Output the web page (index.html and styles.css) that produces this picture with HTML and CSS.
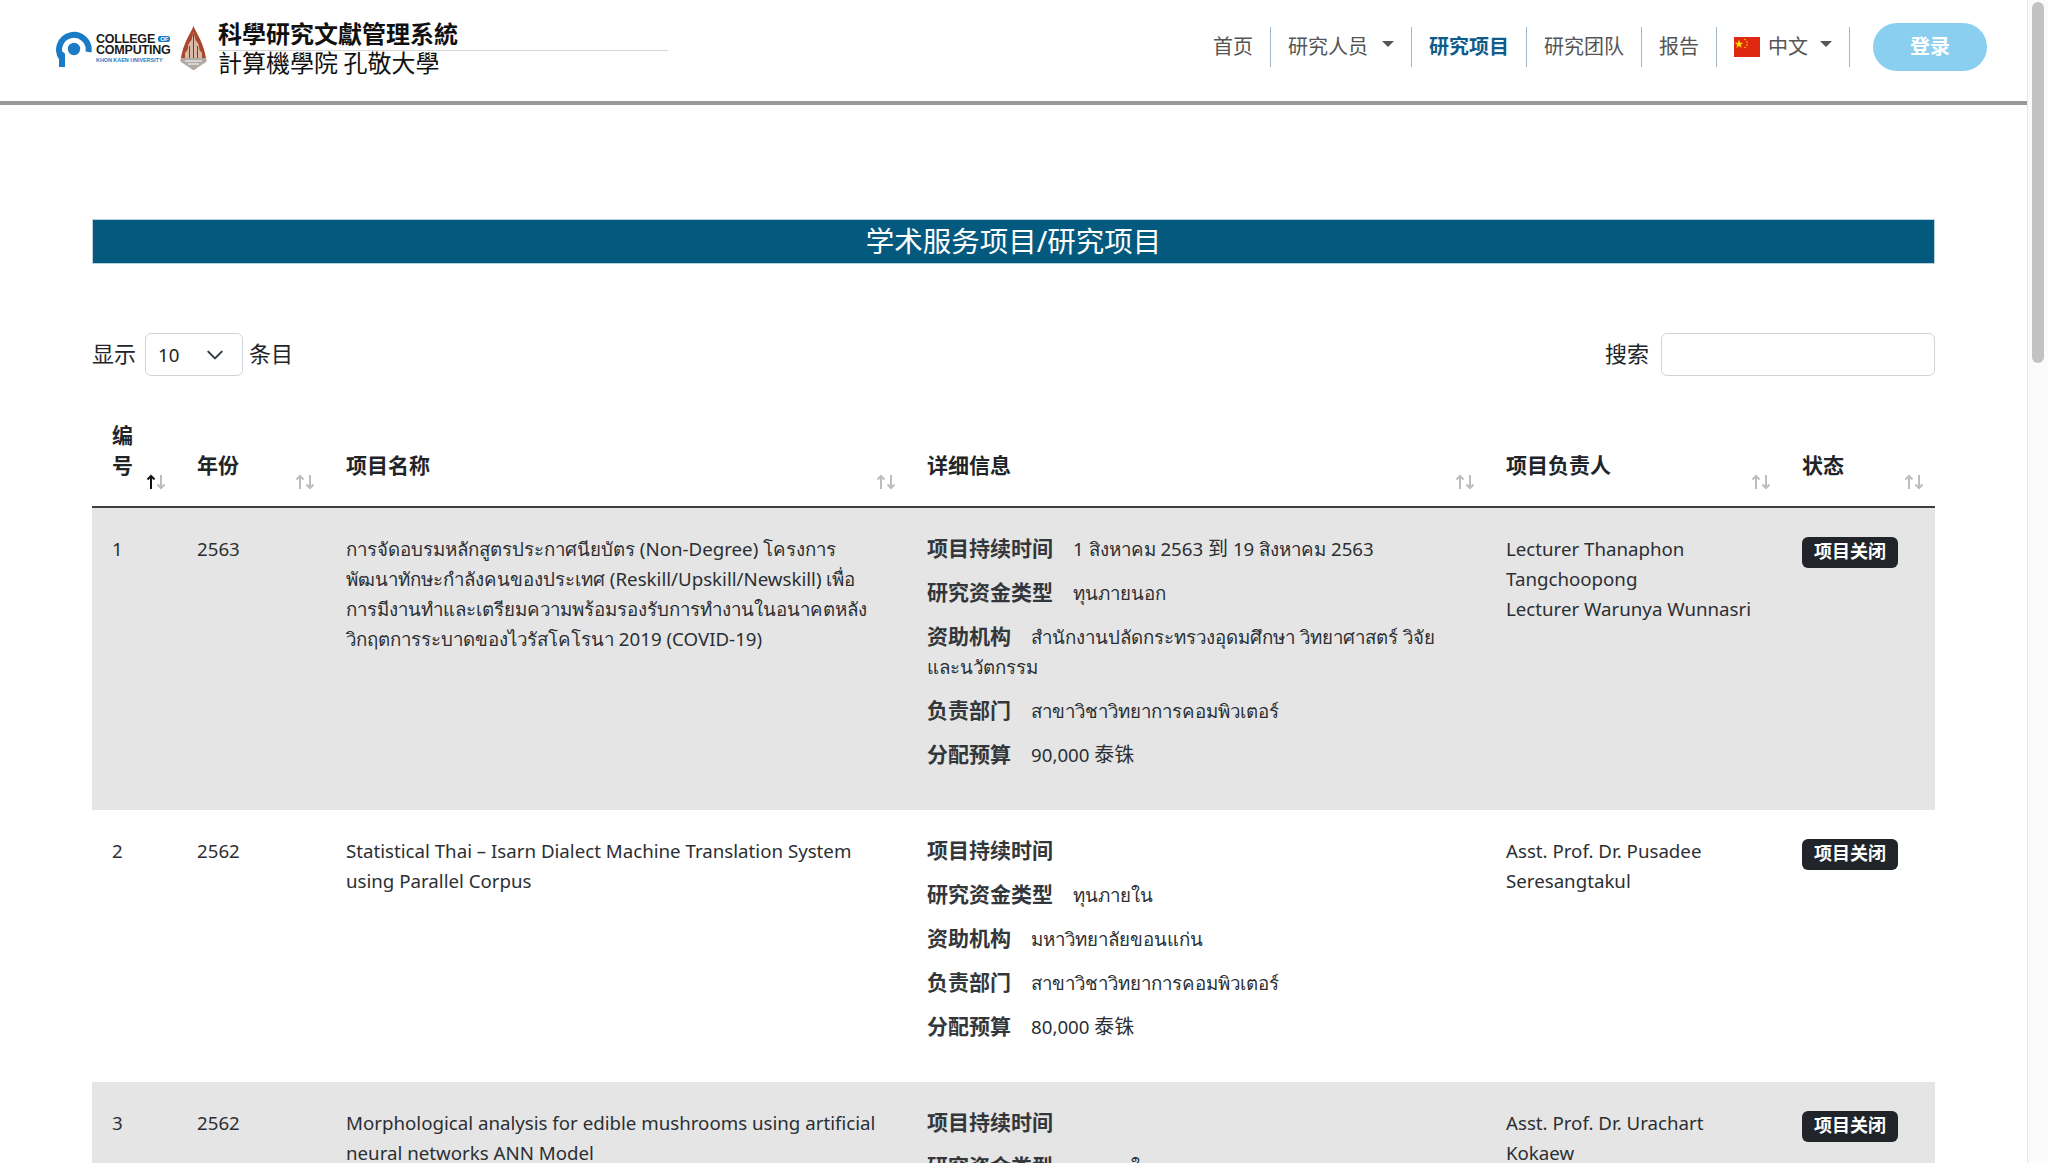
FILE: index.html
```html
<!DOCTYPE html>
<html lang="zh">
<head>
<meta charset="utf-8">
<title>学术服务项目/研究项目</title>
<link rel="stylesheet" href="styles.css">
</head>
<body>
<header class="navbar">
  <a class="brand">
    <svg class="logo-mark" width="36" height="36" viewBox="0 0 36 36"><path d="M6 27.500 A14.800 14.800 0 1 1 32.500 21" fill="none" stroke="#1a7cc4" stroke-width="6"/><path d="M6 24v11" stroke="#1a7cc4" stroke-width="6" stroke-linecap="round"/><circle cx="18" cy="18" r="6.200" fill="#1a7cc4"/></svg>
    <span class="logo-text">
      <span class="logo-line">COLLEGE <span class="logo-of">OF</span></span>
      <span class="logo-line">COMPUTING</span>
      <span class="logo-uni">KHON KAEN UNIVERSITY</span>
    </span>
    <svg class="emblem" width="27" height="46" viewBox="0 0 27 46"><path d="M13.500 1C16 8 24 17 26.500 36L13.500 45L.5 36C3 17 11 8 13.500 1Z" fill="#a9472e"/><path d="M13.500 7L15.500 15L18.500 19L19.500 25L22 28V34H5V28L7.500 25L8.500 19L11.500 15Z" fill="#d9b8a6"/><path d="M13.500 9V33M9.500 21V33M17.500 21V33" stroke="#7b3a26" stroke-width="1"/><path d="M1 33H26V37L13.500 45L1 37Z" fill="#b0aaa3"/><path d="M5 36H22M8 39H19" stroke="#fff" stroke-width="1"/></svg>
    <span class="brand-text">
      <span class="brand-title">科學研究文獻管理系統</span>
      <span class="brand-sub">計算機學院 孔敬大學</span>
    </span>
  </a>
  <nav class="nav">
    <a class="nav-item">首页</a>
    <a class="nav-item has-caret">研究人员</a>
    <a class="nav-item active">研究项目</a>
    <a class="nav-item">研究团队</a>
    <a class="nav-item">报告</a>
    <a class="nav-item has-caret lang">
      <svg class="flag" width="26" height="20" viewBox="0 0 26 20"><rect width="26" height="20" fill="#de2910"/><path d="M5 2.500l1.100 3.200h3.300l-2.700 2 1 3.200L5 9l-2.700 1.900 1-3.200-2.700-2h3.300z" fill="#ffde00"/><circle cx="11" cy="2.500" r=".8" fill="#ffde00"/><circle cx="13" cy="5" r=".8" fill="#ffde00"/><circle cx="13" cy="8" r=".8" fill="#ffde00"/><circle cx="11" cy="10.500" r=".8" fill="#ffde00"/></svg>
      中文
    </a>
    <a class="login">登录</a>
  </nav>
</header>

<main class="page">
  <h1 class="page-title">学术服务项目/研究项目</h1>

  <div class="controls">
    <label class="length">显示
      <span class="select">10
        <svg width="18" height="18" viewBox="0 0 16 16"><path d="M2 5l6 6 6-6" fill="none" stroke="#343a40" stroke-width="1.800" stroke-linecap="round" stroke-linejoin="round"/></svg>
      </span>
    条目</label>
    <label class="search">搜索 <span class="search-box"></span></label>
  </div>

  <table class="data">
    <colgroup>
      <col class="c-no"><col class="c-year"><col class="c-name"><col class="c-detail"><col class="c-lead"><col class="c-status">
    </colgroup>
    <thead>
      <tr>
        <th>编号<svg class="sort" width="20" height="16" viewBox="0 0 20 16"><path class="up-on" d="M5 15V2M1.500 5.500L5 2l3.500 3.500"/><path d="M15 1V14M11.500 10.500L15 14l3.500-3.500"/></svg></th>
        <th>年份<svg class="sort" width="20" height="16" viewBox="0 0 20 16"><path d="M5 15V2M1.500 5.500L5 2l3.500 3.500"/><path d="M15 1V14M11.500 10.500L15 14l3.500-3.500"/></svg></th>
        <th>项目名称<svg class="sort" width="20" height="16" viewBox="0 0 20 16"><path d="M5 15V2M1.500 5.500L5 2l3.500 3.500"/><path d="M15 1V14M11.500 10.500L15 14l3.500-3.500"/></svg></th>
        <th>详细信息<svg class="sort" width="20" height="16" viewBox="0 0 20 16"><path d="M5 15V2M1.500 5.500L5 2l3.500 3.500"/><path d="M15 1V14M11.500 10.500L15 14l3.500-3.500"/></svg></th>
        <th>项目负责人<svg class="sort" width="20" height="16" viewBox="0 0 20 16"><path d="M5 15V2M1.500 5.500L5 2l3.500 3.500"/><path d="M15 1V14M11.500 10.500L15 14l3.500-3.500"/></svg></th>
        <th>状态<svg class="sort" width="20" height="16" viewBox="0 0 20 16"><path d="M5 15V2M1.500 5.500L5 2l3.500 3.500"/><path d="M15 1V14M11.500 10.500L15 14l3.500-3.500"/></svg></th>
      </tr>
    </thead>
    <tbody>
      <tr class="odd">
        <td>1</td>
        <td>2563</td>
        <td>การจัดอบรมหลักสูตรประกาศนียบัตร (Non-Degree) โครงการ<br>พัฒนาทักษะกำลังคนของประเทศ (Reskill/Upskill/Newskill) เพื่อ<br>การมีงานทำและเตรียมความพร้อมรองรับการทำงานในอนาคตหลัง<br>วิกฤตการระบาดของไวรัสโคโรนา 2019 (COVID-19)</td>
        <td>
          <p class="info"><strong>项目持续时间</strong>1 สิงหาคม 2563 <span class="cjk">到</span> 19 สิงหาคม 2563</p>
          <p class="info"><strong>研究资金类型</strong>ทุนภายนอก</p>
          <p class="info"><strong>资助机构</strong>สำนักงานปลัดกระทรวงอุดมศึกษา วิทยาศาสตร์ วิจัย และนวัตกรรม</p>
          <p class="info"><strong>负责部门</strong>สาขาวิชาวิทยาการคอมพิวเตอร์</p>
          <p class="info"><strong>分配预算</strong>90,000 <span class="cjk">泰铢</span></p>
        </td>
        <td>Lecturer Thanaphon Tangchoopong<br>Lecturer Warunya Wunnasri</td>
        <td><span class="badge">项目关闭</span></td>
      </tr>
      <tr>
        <td>2</td>
        <td>2562</td>
        <td>Statistical Thai – Isarn Dialect Machine Translation System using Parallel Corpus</td>
        <td>
          <p class="info"><strong>项目持续时间</strong></p>
          <p class="info"><strong>研究资金类型</strong>ทุนภายใน</p>
          <p class="info"><strong>资助机构</strong>มหาวิทยาลัยขอนแก่น</p>
          <p class="info"><strong>负责部门</strong>สาขาวิชาวิทยาการคอมพิวเตอร์</p>
          <p class="info"><strong>分配预算</strong>80,000 <span class="cjk">泰铢</span></p>
        </td>
        <td>Asst. Prof. Dr. Pusadee Seresangtakul</td>
        <td><span class="badge">项目关闭</span></td>
      </tr>
      <tr class="odd">
        <td>3</td>
        <td>2562</td>
        <td>Morphological analysis for edible mushrooms using artificial neural networks ANN Model</td>
        <td>
          <p class="info"><strong>项目持续时间</strong></p>
          <p class="info"><strong>研究资金类型</strong>ทุนภายใน</p>
        </td>
        <td>Asst. Prof. Dr. Urachart Kokaew</td>
        <td><span class="badge">项目关闭</span></td>
      </tr>
    </tbody>
  </table>
</main>
<div class="scrollbar"><div class="scroll-thumb"></div></div>
</body>
</html>
```
FILE: styles.css
```css
* { box-sizing: border-box; }
body {
  margin: 0;
  padding-right: 21px;
  background: #fff;
  color: #212529;
  font: 400 20px/30px "Noto Sans", "Noto Sans CJK SC", sans-serif;
}
.scrollbar {
  position: fixed;
  top: 0;
  right: 0;
  bottom: 0;
  width: 21px;
  background: #fbfbfb;
  border-left: 1px solid #e6e6e6;
  padding: 2px 4px 0 4px;
}
.scroll-thumb { height: 361px; background: #c2c2c2; border-radius: 6px; }

.navbar {
  height: 105px;
  border-bottom: 4px solid #999;
  padding: 0 40px 4px 56px;
  display: flex;
  align-items: center;
  justify-content: space-between;
}
.brand { display: flex; align-items: center; }
.logo-mark { flex: none; }
.logo-text { display: flex; flex-direction: column; margin-left: 4px; width: 76px; font-family: "Liberation Sans", sans-serif; font-weight: 700; color: #1b1b1b; }
.logo-line { font-size: 12.5px; line-height: 11px; white-space: nowrap; letter-spacing: -.2px; }
.logo-of { background: #1a7cc4; color: #fff; font-size: 6px; border-radius: 2px; padding: 0 2px; vertical-align: 2px; }
.logo-uni { font-size: 5.4px; line-height: 8px; color: #1a7cc4; white-space: nowrap; }
.emblem { margin: -2px 11px 0 8px; flex: none; }
.brand-text { display: flex; flex-direction: column; width: 450px; height: 61px; font-family: "Noto Sans CJK TC", sans-serif; color: #111; font-size: 24px; }
.brand-title { font-weight: 700; line-height: 29px; border-bottom: 1px solid #d6d6d6; height: 33px; }
.brand-sub { line-height: 22px; }

.nav { display: flex; align-items: center; margin-bottom: 4px; }
.nav-item {
  display: flex;
  align-items: center;
  height: 40px;
  padding: 0 17px;
  border-right: 1px solid #a3b7cb;
  color: #555;
  white-space: nowrap;
}
.nav-item.active { color: #0f5c8c; font-weight: 700; }
.has-caret::after {
  content: "";
  margin-left: 14px;
  margin-top: -6px;
  border-top: 6px solid #555;
  border-left: 6px solid transparent;
  border-right: 6px solid transparent;
}
.lang.has-caret::after { margin-left: 12px; }
.lang .flag { margin-right: 8px; }
.login {
  margin-left: 23px;
  width: 114px;
  height: 48px;
  border-radius: 24px;
  background: #8bcff0;
  color: #fff;
  font-weight: 700;
  display: flex;
  align-items: center;
  justify-content: center;
}

.page { padding: 114px 92px 0 92px; }
.page-title {
  margin: 0;
  height: 45px;
  background: #045a7e;
  border: 1px solid #bcd0da;
  color: #fff;
  font-size: 28.5px;
  font-weight: 400;
  line-height: 43px;
  text-align: center;
}
.controls {
  display: flex;
  justify-content: space-between;
  align-items: center;
  margin-top: 69px;
  height: 43px;
  font-size: 22px;
}
.length, .search { display: flex; align-items: flex-start; height: 43px; line-height: 40px; }
.select {
  display: flex;
  align-items: center;
  justify-content: space-between;
  width: 98px;
  height: 43px;
  margin: 0 6px 0 9px;
  padding: 0 18px 0 12px;
  border: 1px solid #ced4da;
  border-radius: 6px;
  font-size: 18.7px;
}
.search-box {
  width: 274px;
  height: 43px;
  margin-left: 12px;
  border: 1px solid #ced4da;
  border-radius: 6px;
}

.data { width: 100%; border-collapse: collapse; table-layout: fixed; margin-top: 34px; }
.c-no { width: 85px; }
.c-year { width: 149px; }
.c-name { width: 581px; }
.c-detail { width: 579px; }
.c-lead { width: 296px; }
.c-status { width: 153px; }
th {
  position: relative;
  padding: 10px 30px 26px 20px;
  text-align: left;
  vertical-align: bottom;
  font-size: 21px;
  font-weight: 700;
  border-bottom: 2px solid #3d4043;
}
.sort { position: absolute; right: 11px; bottom: 16px; fill: none; stroke: #bdbdbd; stroke-width: 2; }
.sort .up-on { stroke: #111; }
td { padding: 26px 20px 40px; vertical-align: top; line-height: 30px; font-size: 18.7px; color: #2b2f33; }
tr.odd td { background: #e5e5e5; }
.cjk { font-size: 20px; line-height: 1; }
.info { margin: 0 0 14px; }
.info:last-child { margin-bottom: 0; }
.info strong { margin-right: 20px; font-size: 21px; line-height: 1; font-weight: 700; color: #33373b; }
.badge {
  display: inline-block;
  height: 31px;
  padding: 0 12px;
  border-radius: 6px;
  background: #212529;
  color: #fff;
  font-size: 18px;
  font-weight: 700;
  line-height: 29px;
  margin-top: 3px;
  vertical-align: top;
}
```
